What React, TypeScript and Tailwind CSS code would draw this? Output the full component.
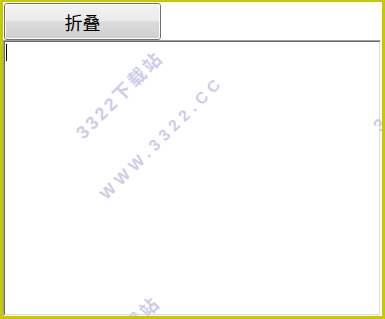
import React from "react";

const wmFont = '"Liberation Sans", "Noto Sans CJK SC", sans-serif';

function Watermark({ text, x, y, spacing, size }: { text: string; x: number; y: number; spacing: number; size: number }) {
  return (
    <div
      className="absolute font-bold leading-none text-[#cdcdea] whitespace-nowrap select-none pointer-events-none"
      style={{
        left: x,
        top: y,
        fontSize: size,
        letterSpacing: spacing,
        transform: "translate(-50%,-50%) rotate(-45deg)",
        fontFamily: wmFont,
      }}
    >
      {text}
    </div>
  );
}

export default function App() {
  return (
    <div
      className="relative w-[385px] h-[319px] bg-[#c8c800] pl-[3px] pt-[2px] pr-[3px] pb-[3px] overflow-hidden"
      style={{ fontFamily: '"Noto Sans CJK SC", "Liberation Sans", sans-serif' }}
    >
      <div className="flex flex-col w-full h-full bg-white">
        <div className="pl-[1px] pt-[1px] h-[38px]">
          <button className="w-[157px] h-[37px] rounded-[3px] border border-[#707070] p-0 flex">
            <div className="flex-1 rounded-[2px] border border-[#fbfbfb] bg-[linear-gradient(to_bottom,#f2f2f2_0%,#ebebeb_50%,#dddddd_50%,#cfcfcf_100%)] flex items-center justify-center text-[18px] text-black leading-none">
              折叠
            </div>
          </button>
        </div>
        <div className="flex-1 mr-[1px] border-t border-l border-t-[#a0a0a0] border-l-[#a0a0a0] border-r border-b border-r-[#ffffff] border-b-[#ffffff] flex">
          <div className="flex-1 border-t border-l border-t-[#696969] border-l-[#696969] border-r border-b border-r-[#dcdcdc] border-b-[#dcdcdc] pl-[1px] pt-[2px]">
            <div className="w-[1px] h-[17px] bg-black" />
          </div>
        </div>
      </div>
      <div className="absolute left-[3px] top-[2px] w-[379px] h-[314px] overflow-hidden pointer-events-none">
        <Watermark text="3322下载站" x={117} y={93} spacing={3} size={18} />
        <Watermark text="WWW.3322.CC" x={159} y={136} spacing={5} size={16} />
        <Watermark text="3322下载站" x={414} y={86} spacing={3} size={18} />
        <Watermark text="3322下载站" x={114} y={338} spacing={3} size={18} />
      </div>
    </div>
  );
}
